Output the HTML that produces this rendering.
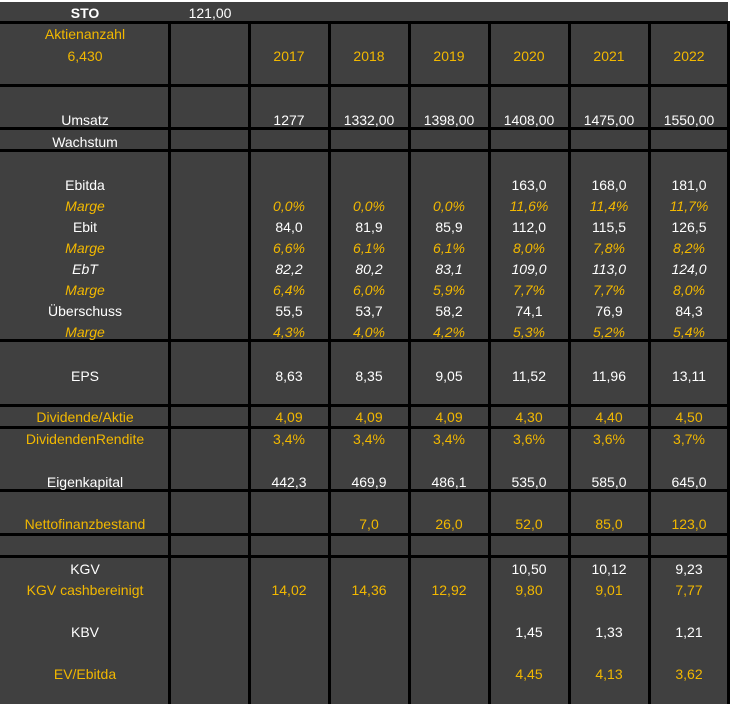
<!DOCTYPE html>
<html><head><meta charset="utf-8"><style>
body{margin:0;width:730px;height:704px;background:#fff;overflow:hidden;font-family:"Liberation Sans",sans-serif;}
#w{position:absolute;left:0;top:2px;width:728px;height:702px;background:#404040;}
.h{position:absolute;left:0;width:728px;height:3px;background:#000;}
.v{position:absolute;width:3px;background:#000;}
.t{position:absolute;transform:translate(-50%,-50%);margin-top:1px;font-size:14px;color:#fff;white-space:nowrap;line-height:16px;}
.y{color:#f2b800;}
.i{font-style:italic;}
</style></head><body>
<div id="w"></div>
<div class="h" style="top:21px"></div>
<div class="h" style="top:84px"></div>
<div class="h" style="top:127px"></div>
<div class="h" style="top:149px"></div>
<div class="h" style="top:339px"></div>
<div class="h" style="top:404px"></div>
<div class="h" style="top:426px"></div>
<div class="h" style="top:489px"></div>
<div class="h" style="top:533px"></div>
<div class="h" style="top:555px"></div>
<div class="v" style="left:168px;top:21px;height:683px"></div>
<div class="v" style="left:248px;top:21px;height:683px"></div>
<div class="v" style="left:328px;top:21px;height:683px"></div>
<div class="v" style="left:408px;top:21px;height:683px"></div>
<div class="v" style="left:488px;top:21px;height:683px"></div>
<div class="v" style="left:568px;top:21px;height:683px"></div>
<div class="v" style="left:648px;top:21px;height:683px"></div>
<div class="v" style="left:727px;top:21px;height:683px"></div>

<div class="t" style="left:85px;top:12px;font-weight:bold">STO</div>
<div class="t" style="left:210px;top:12px">121,00</div>

<div class="t y" style="left:85px;top:33px">Aktienanzahl</div>
<div class="t y" style="left:85px;top:55px">6,430</div>
<div class="t y" style="left:289px;top:55px">2017</div>
<div class="t y" style="left:369px;top:55px">2018</div>
<div class="t y" style="left:449px;top:55px">2019</div>
<div class="t y" style="left:529px;top:55px">2020</div>
<div class="t y" style="left:609px;top:55px">2021</div>
<div class="t y" style="left:689px;top:55px">2022</div>

<div class="t" style="left:85px;top:119px">Umsatz</div>
<div class="t" style="left:289px;top:119px">1277</div>
<div class="t" style="left:369px;top:119px">1332,00</div>
<div class="t" style="left:449px;top:119px">1398,00</div>
<div class="t" style="left:529px;top:119px">1408,00</div>
<div class="t" style="left:609px;top:119px">1475,00</div>
<div class="t" style="left:689px;top:119px">1550,00</div>

<div class="t" style="left:85px;top:141px">Wachstum</div>

<div class="t" style="left:85px;top:184px">Ebitda</div>
<div class="t" style="left:529px;top:184px">163,0</div>
<div class="t" style="left:609px;top:184px">168,0</div>
<div class="t" style="left:689px;top:184px">181,0</div>

<div class="t y i" style="left:85px;top:205px">Marge</div>
<div class="t y i" style="left:289px;top:205px">0,0%</div>
<div class="t y i" style="left:369px;top:205px">0,0%</div>
<div class="t y i" style="left:449px;top:205px">0,0%</div>
<div class="t y i" style="left:529px;top:205px">11,6%</div>
<div class="t y i" style="left:609px;top:205px">11,4%</div>
<div class="t y i" style="left:689px;top:205px">11,7%</div>

<div class="t" style="left:85px;top:226px">Ebit</div>
<div class="t" style="left:289px;top:226px">84,0</div>
<div class="t" style="left:369px;top:226px">81,9</div>
<div class="t" style="left:449px;top:226px">85,9</div>
<div class="t" style="left:529px;top:226px">112,0</div>
<div class="t" style="left:609px;top:226px">115,5</div>
<div class="t" style="left:689px;top:226px">126,5</div>

<div class="t y i" style="left:85px;top:247px">Marge</div>
<div class="t y i" style="left:289px;top:247px">6,6%</div>
<div class="t y i" style="left:369px;top:247px">6,1%</div>
<div class="t y i" style="left:449px;top:247px">6,1%</div>
<div class="t y i" style="left:529px;top:247px">8,0%</div>
<div class="t y i" style="left:609px;top:247px">7,8%</div>
<div class="t y i" style="left:689px;top:247px">8,2%</div>

<div class="t i" style="left:85px;top:268px">EbT</div>
<div class="t i" style="left:289px;top:268px">82,2</div>
<div class="t i" style="left:369px;top:268px">80,2</div>
<div class="t i" style="left:449px;top:268px">83,1</div>
<div class="t i" style="left:529px;top:268px">109,0</div>
<div class="t i" style="left:609px;top:268px">113,0</div>
<div class="t i" style="left:689px;top:268px">124,0</div>

<div class="t y i" style="left:85px;top:289px">Marge</div>
<div class="t y i" style="left:289px;top:289px">6,4%</div>
<div class="t y i" style="left:369px;top:289px">6,0%</div>
<div class="t y i" style="left:449px;top:289px">5,9%</div>
<div class="t y i" style="left:529px;top:289px">7,7%</div>
<div class="t y i" style="left:609px;top:289px">7,7%</div>
<div class="t y i" style="left:689px;top:289px">8,0%</div>

<div class="t" style="left:85px;top:310px">Überschuss</div>
<div class="t" style="left:289px;top:310px">55,5</div>
<div class="t" style="left:369px;top:310px">53,7</div>
<div class="t" style="left:449px;top:310px">58,2</div>
<div class="t" style="left:529px;top:310px">74,1</div>
<div class="t" style="left:609px;top:310px">76,9</div>
<div class="t" style="left:689px;top:310px">84,3</div>

<div class="t y i" style="left:85px;top:331px">Marge</div>
<div class="t y i" style="left:289px;top:331px">4,3%</div>
<div class="t y i" style="left:369px;top:331px">4,0%</div>
<div class="t y i" style="left:449px;top:331px">4,2%</div>
<div class="t y i" style="left:529px;top:331px">5,3%</div>
<div class="t y i" style="left:609px;top:331px">5,2%</div>
<div class="t y i" style="left:689px;top:331px">5,4%</div>

<div class="t" style="left:85px;top:375px">EPS</div>
<div class="t" style="left:289px;top:375px">8,63</div>
<div class="t" style="left:369px;top:375px">8,35</div>
<div class="t" style="left:449px;top:375px">9,05</div>
<div class="t" style="left:529px;top:375px">11,52</div>
<div class="t" style="left:609px;top:375px">11,96</div>
<div class="t" style="left:689px;top:375px">13,11</div>

<div class="t y" style="left:85px;top:416px">Dividende/Aktie</div>
<div class="t y" style="left:289px;top:416px">4,09</div>
<div class="t y" style="left:369px;top:416px">4,09</div>
<div class="t y" style="left:449px;top:416px">4,09</div>
<div class="t y" style="left:529px;top:416px">4,30</div>
<div class="t y" style="left:609px;top:416px">4,40</div>
<div class="t y" style="left:689px;top:416px">4,50</div>

<div class="t y" style="left:85px;top:438px">DividendenRendite</div>
<div class="t y" style="left:289px;top:438px">3,4%</div>
<div class="t y" style="left:369px;top:438px">3,4%</div>
<div class="t y" style="left:449px;top:438px">3,4%</div>
<div class="t y" style="left:529px;top:438px">3,6%</div>
<div class="t y" style="left:609px;top:438px">3,6%</div>
<div class="t y" style="left:689px;top:438px">3,7%</div>

<div class="t" style="left:85px;top:481px">Eigenkapital</div>
<div class="t" style="left:289px;top:481px">442,3</div>
<div class="t" style="left:369px;top:481px">469,9</div>
<div class="t" style="left:449px;top:481px">486,1</div>
<div class="t" style="left:529px;top:481px">535,0</div>
<div class="t" style="left:609px;top:481px">585,0</div>
<div class="t" style="left:689px;top:481px">645,0</div>

<div class="t y" style="left:85px;top:523px">Nettofinanzbestand</div>
<div class="t y" style="left:369px;top:523px">7,0</div>
<div class="t y" style="left:449px;top:523px">26,0</div>
<div class="t y" style="left:529px;top:523px">52,0</div>
<div class="t y" style="left:609px;top:523px">85,0</div>
<div class="t y" style="left:689px;top:523px">123,0</div>

<div class="t" style="left:85px;top:568px">KGV</div>
<div class="t" style="left:529px;top:568px">10,50</div>
<div class="t" style="left:609px;top:568px">10,12</div>
<div class="t" style="left:689px;top:568px">9,23</div>

<div class="t y" style="left:85px;top:589px">KGV cashbereinigt</div>
<div class="t y" style="left:289px;top:589px">14,02</div>
<div class="t y" style="left:369px;top:589px">14,36</div>
<div class="t y" style="left:449px;top:589px">12,92</div>
<div class="t y" style="left:529px;top:589px">9,80</div>
<div class="t y" style="left:609px;top:589px">9,01</div>
<div class="t y" style="left:689px;top:589px">7,77</div>

<div class="t" style="left:85px;top:631px">KBV</div>
<div class="t" style="left:529px;top:631px">1,45</div>
<div class="t" style="left:609px;top:631px">1,33</div>
<div class="t" style="left:689px;top:631px">1,21</div>

<div class="t y" style="left:85px;top:673px">EV/Ebitda</div>
<div class="t y" style="left:529px;top:673px">4,45</div>
<div class="t y" style="left:609px;top:673px">4,13</div>
<div class="t y" style="left:689px;top:673px">3,62</div>
</body></html>
